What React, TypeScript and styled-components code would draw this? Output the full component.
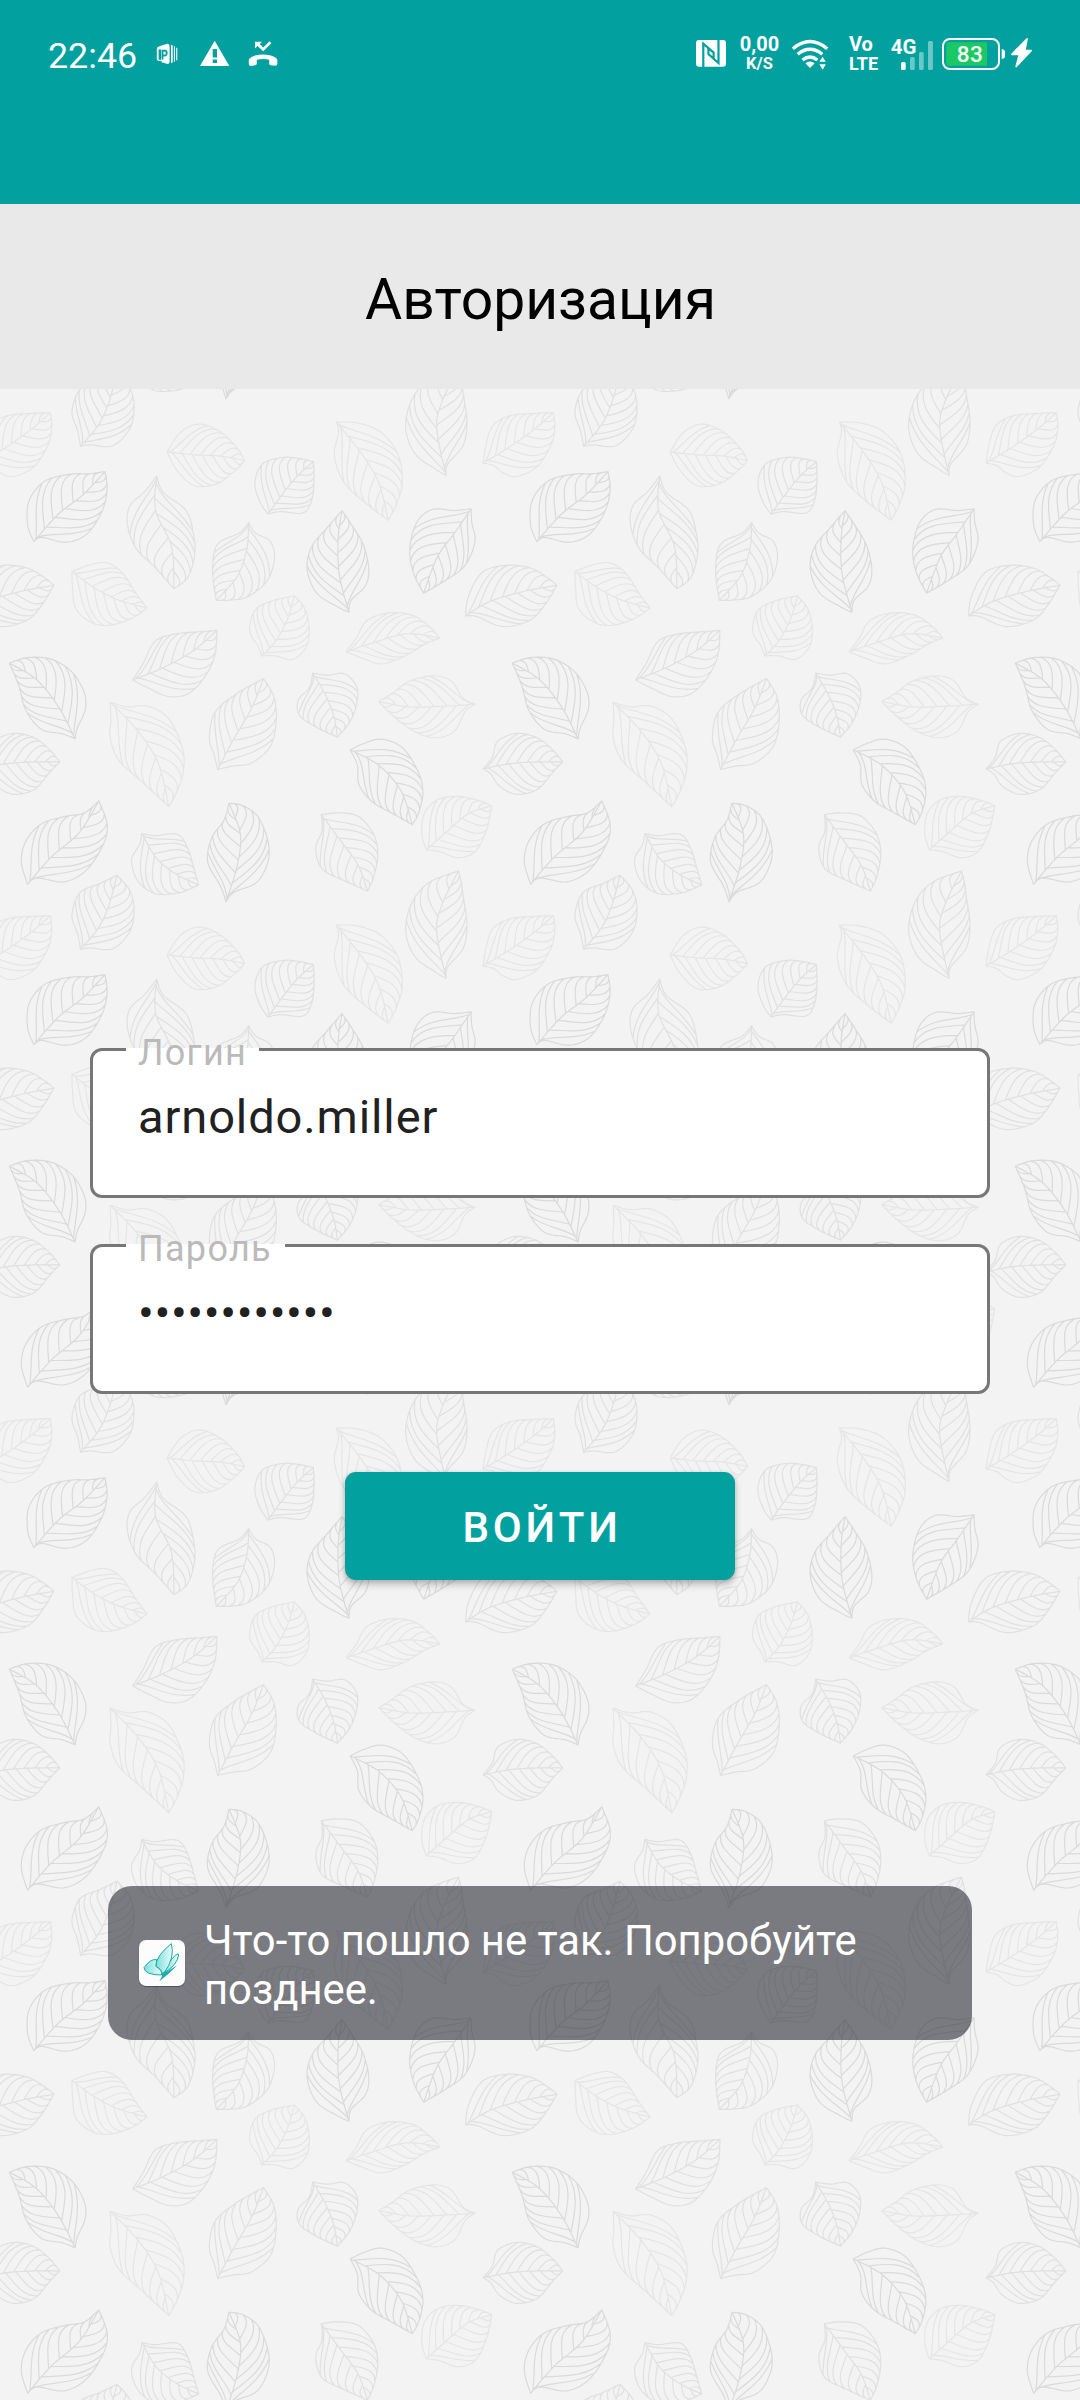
import React from "react";
import styled, { createGlobalStyle } from "styled-components";

const TEAL = "#02a1a0";

const GlobalStyle = createGlobalStyle`
  html, body { margin: 0; padding: 0; }
  body { background: #f3f3f3; font-family: Roboto, "Noto Sans", sans-serif; }
  *, *::before, *::after { box-sizing: border-box; }
`;

/* ---------- leaf wallpaper ---------- */

type Pt = [number, number];
type Leaf = { base: Pt; tip: Pt; a: Pt[]; b: Pt[]; mid: Pt[]; tone: number };

const TONES = ["#e5e5e5", "#e0e0e0", "#dadada"];
const UNIT = 2.9037;
const PERIOD = 503 * UNIT;
const VEINS = 7;

const LEAVES: Leaf[] = [
  { base: [234, 1624], tip: [340, 1409], a: [[225, 1578], [209, 1524], [232, 1460], [290, 1433]], b: [[262, 1620], [328, 1622], [378, 1570], [389, 1505], [376, 1452]], mid: [[285, 1563], [315, 1500]], tone: 1 },
  { base: [485, 180], tip: [710, 205], a: [[525, 122], [580, 99], [640, 122], [690, 170]], b: [[515, 235], [565, 278], [630, 272], [685, 232]], mid: [[560, 188], [640, 192]], tone: 0 },
  { base: [977, 93], tip: [1127, 378], a: [[1040, 96], [1105, 122], [1155, 185], [1168, 270], [1150, 335]], b: [[983, 125], [971, 190], [1000, 270], [1070, 335]], mid: [[1050, 185], [1100, 270]], tone: 0 },
  { base: [1295, 248], tip: [1331, -64], a: [[1265, 230], [1205, 185], [1178, 110], [1195, 30], [1245, -30]], b: [[1300, 215], [1345, 160], [1356, 90], [1345, 10], [1340, -30]], mid: [[1268, 110], [1285, 30]], tone: 1 },
  { base: [1403, 212], tip: [1607, 66], a: [[1410, 165], [1430, 105], [1480, 75], [1550, 68]], b: [[1435, 220], [1460, 240], [1500, 251], [1560, 222], [1600, 160], [1611, 110]], mid: [[1480, 165], [1550, 115]], tone: 0 },
  { base: [98, 440], tip: [305, 237], a: [[80, 390], [85, 320], [130, 265], [200, 245], [260, 243]], b: [[122, 428], [190, 442], [250, 420], [295, 355], [311, 290]], mid: [[170, 360], [240, 305]], tone: 2 },
  { base: [455, 250], tip: [505, 577], a: [[420, 295], [378, 335], [370, 390], [395, 460], [450, 515]], b: [[475, 298], [540, 350], [562, 420], [565, 480], [545, 545]], mid: [[452, 350], [498, 455]], tone: 1 },
  { base: [778, 360], tip: [910, 208], a: [[755, 325], [740, 270], [762, 215], [820, 196], [870, 199]], b: [[815, 353], [880, 357], [905, 320], [912, 260]], mid: [[822, 300], [865, 248]], tone: 1 },
  { base: [722, 385], tip: [628, 611], a: [[695, 415], [640, 440], [621, 475], [618, 540]], b: [[742, 415], [785, 440], [797, 490], [775, 555], [720, 600], [670, 610]], mid: [[717, 460], [690, 540]], tone: 1 },
  { base: [1013, 645], tip: [993, 350], a: [[985, 632], [920, 590], [892, 520], [905, 455], [950, 400]], b: [[1020, 610], [1060, 570], [1071, 520], [1055, 450], [1020, 390]], mid: [[985, 535], [982, 430]], tone: 2 },
  { base: [1368, 345], tip: [1230, 590], a: [[1320, 350], [1255, 347], [1210, 385], [1190, 460], [1200, 530]], b: [[1370, 385], [1379, 440], [1350, 510], [1290, 555]], mid: [[1320, 415], [1270, 485]], tone: 2 },
  { base: [1352, 656], tip: [1617, 567], a: [[1360, 600], [1400, 530], [1470, 509], [1540, 517], [1590, 545]], b: [[1385, 658], [1460, 687], [1540, 668], [1585, 620]], mid: [[1420, 615], [1520, 585]], tone: 1 },
  { base: [209, 527], tip: [427, 633], a: [[260, 508], [310, 502], [355, 530], [395, 590]], b: [[211, 580], [220, 635], [265, 675], [320, 683], [385, 662]], mid: [[275, 575], [345, 610]], tone: 0 },
  { base: [760, 772], tip: [855, 598], a: [[750, 745], [725, 700], [740, 640], [790, 612]], b: [[800, 772], [850, 782], [890, 745], [898, 690], [885, 635]], mid: [[800, 730], [835, 665]], tone: 0 },
  { base: [1005, 760], tip: [1277, 720], a: [[1035, 720], [1065, 670], [1130, 647], [1200, 655], [1250, 690]], b: [[1050, 778], [1110, 795], [1180, 770], [1230, 740]], mid: [[1080, 735], [1180, 708]], tone: 0 },
  { base: [385, 842], tip: [630, 698], a: [[415, 795], [450, 730], [510, 708], [580, 702]], b: [[430, 865], [490, 890], [550, 880], [600, 825], [625, 765]], mid: [[470, 808], [560, 758]], tone: 1 },
  { base: [218, 1013], tip: [27, 793], a: [[225, 980], [247, 930], [245, 880], [210, 820], [150, 782], [80, 777]], b: [[180, 998], [120, 985], [75, 930], [55, 860]], mid: [[170, 920], [105, 840]], tone: 2 },
  { base: [320, 907], tip: [490, 1210], a: [[370, 920], [430, 918], [490, 955], [530, 1040], [532, 1110], [512, 1170]], b: [[322, 960], [320, 1010], [345, 1075], [415, 1140]], mid: [[400, 990], [460, 1085]], tone: 0 },
  { base: [632, 1102], tip: [765, 838], a: [[622, 1060], [608, 1010], [625, 935], [690, 880]], b: [[675, 1092], [730, 1083], [785, 1035], [802, 960], [795, 890]], mid: [[675, 1020], [730, 925]], tone: 1 },
  { base: [908, 822], tip: [980, 1008], a: [[898, 865], [866, 900], [870, 945], [920, 980]], b: [[950, 828], [1000, 824], [1035, 860], [1036, 910], [1015, 965]], mid: [[945, 885], [970, 950]], tone: 1 },
  { base: [1380, 912], tip: [1100, 905], a: [[1345, 895], [1310, 845], [1260, 830], [1190, 845], [1140, 880]], b: [[1350, 935], [1320, 990], [1265, 1010], [1200, 990], [1140, 945]], mid: [[1290, 918], [1190, 920]], tone: 0 },
  { base: [1403, 1100], tip: [1634, 1080], a: [[1430, 1065], [1445, 1020], [1500, 997], [1560, 1010], [1605, 1045]], b: [[1425, 1115], [1450, 1150], [1500, 1174], [1560, 1160], [1605, 1110]], mid: [[1480, 1085], [1560, 1080]], tone: 1 },
  { base: [1017, 1045], tip: [1197, 1262], a: [[1060, 1025], [1110, 1014], [1170, 1040], [1215, 1110], [1228, 1170], [1215, 1230]], b: [[1038, 1090], [1042, 1145], [1080, 1195], [1140, 1230]], mid: [[1100, 1090], [1165, 1165]], tone: 2 },
  { base: [1238, 1335], tip: [1428, 1207], a: [[1225, 1290], [1232, 1230], [1270, 1190], [1330, 1180], [1390, 1192]], b: [[1275, 1340], [1330, 1358], [1380, 1340], [1410, 1285], [1422, 1240]], mid: [[1300, 1280], [1360, 1230]], tone: 0 },
  { base: [80, 1435], tip: [287, 1193], a: [[62, 1370], [75, 1310], [120, 1260], [190, 1238], [245, 1228]], b: [[108, 1417], [185, 1428], [250, 1395], [300, 1320], [311, 1260]], mid: [[150, 1355], [230, 1285]], tone: 2 },
  { base: [412, 1288], tip: [577, 1437], a: [[450, 1294], [515, 1290], [545, 1330], [562, 1385]], b: [[405, 1320], [382, 1365], [400, 1425], [450, 1462], [520, 1460]], mid: [[455, 1360], [515, 1408]], tone: 1 },
  { base: [656, 1486], tip: [665, 1200], a: [[640, 1440], [603, 1370], [615, 1300], [650, 1250]], b: [[680, 1458], [745, 1430], [778, 1370], [778, 1310], [750, 1240], [705, 1207]], mid: [[688, 1385], [698, 1290]], tone: 2 },
  { base: [933, 1233], tip: [1067, 1455], a: [[935, 1280], [917, 1330], [935, 1390], [1000, 1425]], b: [[980, 1228], [1040, 1238], [1085, 1290], [1097, 1350], [1085, 1415]], mid: [[990, 1310], [1040, 1380]], tone: 1 },
];

function spline(pts: Pt[]): Pt[] {
  const out: Pt[] = [];
  for (let i = 0; i < pts.length - 1; i++) {
    const p0 = pts[Math.max(0, i - 1)];
    const p1 = pts[i];
    const p2 = pts[i + 1];
    const p3 = pts[Math.min(pts.length - 1, i + 2)];
    for (let s = 0; s < 10; s++) {
      const t = s / 10;
      const f = (k: 0 | 1) =>
        0.5 * (2 * p1[k] + (p2[k] - p0[k]) * t + (2 * p0[k] - 5 * p1[k] + 4 * p2[k] - p3[k]) * t * t + (3 * p1[k] - p0[k] - 3 * p2[k] + p3[k]) * t * t * t);
      out.push([f(0), f(1)]);
    }
  }
  out.push(pts[pts.length - 1]);
  return out;
}

function pointAt(line: Pt[], frac: number): Pt {
  const seg = line.slice(1).map((p, i) => Math.hypot(p[0] - line[i][0], p[1] - line[i][1]));
  let left = seg.reduce((x, y) => x + y, 0) * frac;
  for (let i = 0; i < seg.length; i++) {
    if (left <= seg[i]) {
      const t = left / seg[i];
      return [line[i][0] + (line[i + 1][0] - line[i][0]) * t, line[i][1] + (line[i + 1][1] - line[i][1]) * t];
    }
    left -= seg[i];
  }
  return line[line.length - 1];
}

const fmt = (p: Pt) => `${p[0].toFixed(1)} ${p[1].toFixed(1)}`;
const trace = (line: Pt[]) => "M" + line.map(fmt).join("L");
const mix = (p: Pt, q: Pt, t: number): Pt => [p[0] + (q[0] - p[0]) * t, p[1] + (q[1] - p[1]) * t];

/* Outline, midrib and the veins that leave the rib and sweep along the edge. */
function leafPath({ base, tip, a, b, mid }: Leaf): string {
  const rib = spline([base, ...mid, tip]);
  const parts = [trace(rib)];
  [a, b].forEach((side, n) => {
    const edge = spline([base, ...side, tip]);
    parts.push(trace(edge));
    for (let i = 0; i < VEINS; i++) {
      const start = 0.03 + (i * 0.79) / (VEINS - 1) + n * 0.03;
      const reach = 0.48 * Math.pow(1 - start, 0.76);
      const across = (k: number, t: number) => mix(pointAt(rib, start + reach * k), pointAt(edge, start + reach * k), t);
      parts.push(`M${fmt(pointAt(rib, start))}C${fmt(across(0.35, 0.43))} ${fmt(across(0.6, 0.86))} ${fmt(pointAt(edge, start + reach))}`);
    }
  });
  return parts.join("");
}

const LEAF_PATHS = LEAVES.map((leaf) => ({ d: leafPath(leaf), stroke: TONES[leaf.tone] }));

const Wallpaper = styled.svg`
  grid-area: 1 / 1;
  display: block;
  width: 1080px;
  height: 2011px;
`;

function LeafWallpaper() {
  const cells: [number, number][] = [];
  for (let y = -1; y < 4; y++) for (let x = -1; x < 3; x++) cells.push([x, y]);
  return (
    <Wallpaper viewBox="0 389 1080 2011" aria-hidden="true">
      <defs>
        <g id="leaves" fill="none" strokeWidth="3.5" strokeLinejoin="round" strokeLinecap="round">
          {LEAF_PATHS.map((p, i) => (
            <path key={i} d={p.d} stroke={p.stroke} />
          ))}
        </g>
      </defs>
      <g transform={`translate(0 390) scale(${1 / UNIT})`}>
        {cells.map(([x, y]) => (
          <use key={`${x}:${y}`} href="#leaves" x={x * PERIOD} y={y * PERIOD} />
        ))}
      </g>
    </Wallpaper>
  );
}

/* ---------- page frame ---------- */

const Screen = styled.div`
  width: 1080px;
  height: 2400px;
  display: flex;
  flex-direction: column;
  overflow: hidden;
  background: #f3f3f3;
`;

const TopBar = styled.header`
  flex: none;
  height: 204px;
  background: ${TEAL};
  color: #fff;
`;

const StatusRow = styled.div`
  height: 108px;
  padding: 0 47px 0 48px;
  display: flex;
  align-items: center;
  justify-content: space-between;
`;

const StatusGroup = styled.div<{ $gap?: number }>`
  display: flex;
  align-items: center;
  gap: ${(p) => p.$gap ?? 0}px;
`;

const Clock = styled.span`
  width: 90px;
  font-size: 35.8px;
  line-height: 42px;
  padding-top: 3px;
  white-space: nowrap;
`;

const Glyph = styled.svg<{ $w: number; $ml?: number }>`
  display: block;
  flex: none;
  width: ${(p) => p.$w}px;
  height: 34px;
  margin-left: ${(p) => p.$ml ?? 0}px;
  fill: #fff;
  overflow: visible;
`;

const TinyStack = styled.div<{ $w: number; $ml: number; $align: string }>`
  display: flex;
  flex-direction: column;
  align-items: ${(p) => p.$align};
  width: ${(p) => p.$w}px;
  margin-left: ${(p) => p.$ml}px;
  font-weight: 700;
  white-space: nowrap;
`;

const Tiny = styled.span<{ $size: number; $lh: number }>`
  font-size: ${(p) => p.$size}px;
  line-height: ${(p) => p.$lh}px;
`;

const TitleBar = styled.div`
  flex: none;
  height: 185px;
  display: flex;
  align-items: center;
  justify-content: center;
  padding: 6px 0 0 1px;
  background: #e9e9e9;
`;

const Title = styled.h1`
  margin: 0;
  font-size: 57px;
  line-height: 67px;
  font-weight: 400;
  color: #000;
`;

const Body = styled.main`
  flex: 1;
  display: grid;
  grid-template: 2011px / 1080px;
`;

const Content = styled.div`
  grid-area: 1 / 1;
  z-index: 1;
  display: flex;
  flex-direction: column;
  align-items: center;
  padding-top: 659px;
`;

/* ---------- form ---------- */

const Field = styled.label`
  position: relative;
  display: flex;
  width: 900px;
  height: 150px;
  margin-bottom: 46px;
  padding: 39px 45px 0;
  border: 3px solid #777;
  border-radius: 12px;
  background: #fff;
`;

const FieldLabel = styled.span<{ $w: number }>`
  position: absolute;
  left: 33px;
  top: -3px;
  width: ${(p) => p.$w}px;
  height: 3px;
  padding-left: 12px;
  display: flex;
  align-items: center;
  background: #fff;
  color: #bababa;
  font-size: 36px;
  letter-spacing: 1.3px;
  white-space: nowrap;

  & > span { margin-top: 7px; }
`;

const FieldValue = styled.span<{ $spacing: number }>`
  font-size: 47px;
  line-height: 54px;
  letter-spacing: ${(p) => p.$spacing}px;
  color: #212121;
  white-space: nowrap;
`;

const SubmitButton = styled.button`
  width: 390px;
  height: 108px;
  margin-top: 32px;
  padding: 4px 0 0 4px;
  border: 0;
  border-radius: 11px;
  background: ${TEAL};
  box-shadow: 0 5px 7px rgba(0, 0, 0, 0.2), 0 1px 5px rgba(0, 0, 0, 0.14);
  color: #fff;
  font-family: inherit;
  font-size: 42px;
  line-height: 50px;
  font-weight: 500;
  letter-spacing: 3.75px;
`;

/* ---------- toast ---------- */

const Toast = styled.div`
  display: flex;
  align-items: center;
  gap: 19px;
  width: 864px;
  height: 154px;
  margin-top: 306px;
  padding: 0 31px;
  border-radius: 24px;
  background: rgba(41, 43, 51, 0.6);
`;

const AppIcon = styled.svg`
  flex: none;
  display: block;
  width: 46px;
  height: 46px;
  border-radius: 7px;
  background: #fcfcfc;
  box-shadow: 0 1px 1px rgba(0, 0, 0, 0.35);
`;

const ToastText = styled.p`
  margin: 0;
  padding-top: 4px;
  width: 690px;
  font-size: 41.8px;
  line-height: 49px;
  color: #fff;
`;

function StatusBar() {
  return (
    <StatusRow>
      <StatusGroup $gap={17}>
        <Clock>22:46</Clock>
        <Glyph $w={25} viewBox="155 37 25 34">
          <path d="M161.500 45.500L167.500 43.700Q169.600 44 169.600 46V62Q169.600 64 167.500 64L161.500 62.200V59.500H163.400V56.500H165Q167.600 56 167.600 52.800T165 49.700H161.500V61Q157 61.500 156.800 59V49Q156.800 46.500 159 46.400Z" />
          <path d="M158.600 49.400H161V59.800H158.600Z" fill={TEAL} />
          <path d="M163.400 51.700H165.600V54.500H163.400Z" />
          <path d="M171 44.800L172.700 45.400V62.400L171 63ZM173.900 46L175 46.600V61.400L173.900 62ZM176.200 47.400L177.300 48.200V60L176.200 60.600Z" />
        </Glyph>
        <Glyph $w={33} viewBox="197 37 33 34">
          <path d="M214.700 40.700L229.300 66H200Z" />
          <path d="M212.700 49H217V57.600H212.700ZM212.700 59.500H217V63H212.700Z" fill={TEAL} />
        </Glyph>
        <Glyph $w={32} viewBox="247 37 32 34">
          <path d="M255 41.800H262L259.800 44L263.200 47.400L269.600 41.300L271.400 43.200L263.200 51.200L257.600 45.900L255 48.400Z" />
          <path d="M248.800 60Q250 57 256 55.300Q263 53.700 270 55.300Q276.300 57 277.300 60V64Q277.200 65.600 275.500 65.800L270.600 65.200Q269.300 65 269.200 63.500V59.800Q263 58 256.800 59.800V63.500Q256.700 65 255.400 65.200L250.600 65.900Q248.900 65.700 248.800 64Z" />
        </Glyph>
      </StatusGroup>
      <StatusGroup>
        <Glyph $w={30} viewBox="696 37 30 34">
          <rect x="696" y="40" width="30" height="26.700" rx="3" />
          <path d="M703.300 67V43.600L713.600 52.600V58.300M718.500 39.800V63L708.400 54V48.500" fill="none" stroke={TEAL} strokeWidth="2.200" />
        </Glyph>
        <TinyStack $w={39} $ml={14} $align="center">
          <Tiny $size={20} $lh={18.8}>0,00</Tiny>
          <Tiny $size={16.500} $lh={19.6}>K/S</Tiny>
        </TinyStack>
        <Glyph $w={38} $ml={12} viewBox="791 37 38 34">
          <g fill="none" stroke="#fff" strokeWidth="3.400">
            <path d="M792.800 48.700Q810 34.500 827.200 48.700" />
            <path d="M797.700 54.300Q810 44.200 822.300 54.300" />
            <path d="M802.600 60Q810 54 817.400 60" />
          </g>
          <path d="M805.300 63.200Q810 60 814.700 63.200L810 68ZM822.600 56.800L825.800 61.700H819.400ZM822.600 69.700L825.800 64.200H819.400Z" />
        </Glyph>
        <TinyStack $w={30} $ml={20} $align="flex-start">
          <Tiny $size={20} $lh={19.8}>Vo</Tiny>
          <Tiny $size={18} $lh={17.6}>LTE</Tiny>
        </TinyStack>
        <Glyph $w={43} $ml={12} viewBox="891 37 43 34">
          <text x="890.800" y="53.800" fontSize="20.500" fontWeight="700">4G</text>
          <rect x="901" y="62" width="4.700" height="8" rx="1.500" />
          <g opacity="0.42">
            <rect x="910" y="57" width="4.700" height="13" rx="1.500" />
            <rect x="919" y="52" width="4.700" height="18" rx="1.500" />
            <rect x="928" y="41" width="4.900" height="29" rx="1.500" />
          </g>
        </Glyph>
        <Glyph $w={65} $ml={7} viewBox="941 37 65 34">
          <rect x="943" y="39" width="56" height="30" rx="7" fill="none" stroke="#fff" strokeWidth="2" />
          <path d="M949 42.300H987V65.700H949Q946.300 65.700 946.300 63V45Q946.300 42.300 949 42.300Z" fill="#1bc964" />
          <text x="970" y="62.200" fontSize="22.500" fontWeight="500" textAnchor="middle" letterSpacing="0.5">83</text>
          <path d="M1001.700 49Q1005 49.500 1005 52V56Q1005 58.500 1001.700 59Z" />
        </Glyph>
        <Glyph $w={22} $ml={5} viewBox="1011 37 22 34">
          <path d="M1026.500 38.200Q1028 37.800 1027.800 39.400L1025.800 49.800H1031.300Q1032.600 50 1031.700 51.300L1016.800 67Q1015 67.800 1015.400 66L1018.300 55.300H1012Q1010.500 55 1011.500 53.500Z" />
        </Glyph>
      </StatusGroup>
    </StatusRow>
  );
}

export default function App() {
  return (
    <>
      <GlobalStyle />
      <Screen>
        <TopBar>
          <StatusBar />
        </TopBar>
        <TitleBar>
          <Title>Авторизация</Title>
        </TitleBar>
        <Body>
          <LeafWallpaper />
          <Content>
            <Field>
              <FieldLabel $w={133}><span>Логин</span></FieldLabel>
              <FieldValue $spacing={0.9}>arnoldo.miller</FieldValue>
            </Field>
            <Field>
              <FieldLabel $w={159}><span>Пароль</span></FieldLabel>
              <FieldValue $spacing={0.6}>••••••••••••</FieldValue>
            </Field>
            <SubmitButton type="button">ВОЙТИ</SubmitButton>
            <Toast role="status">
              <AppIcon viewBox="147 209 138 138">
                <defs>
                  <linearGradient id="wing" x1="0" x2="1">
                    <stop offset="0" stopColor="#7de0dc" />
                    <stop offset="1" stopColor="#e8fbfa" />
                  </linearGradient>
                </defs>
                <g stroke="#20aaaa" strokeWidth="3" fill="url(#wing)" strokeLinejoin="round">
                  <path d="M200 268Q182 264 162 292Q164 314 214 314Q219 300 198 288Z" />
                  <path d="M264 250Q244 258 222 308Q262 284 266 254Z" />
                  <path d="M216 314Q218 298 198 288Q196 258 244 220Q256 262 222 308Z" />
                </g>
                <path d="M216 308Q224 303 232 303L262 285L234 312L208 333L216 318Z" fill="#20aaaa" />
              </AppIcon>
              <ToastText>Что-то пошло не так. Попробуйте позднее.</ToastText>
            </Toast>
          </Content>
        </Body>
      </Screen>
    </>
  );
}
